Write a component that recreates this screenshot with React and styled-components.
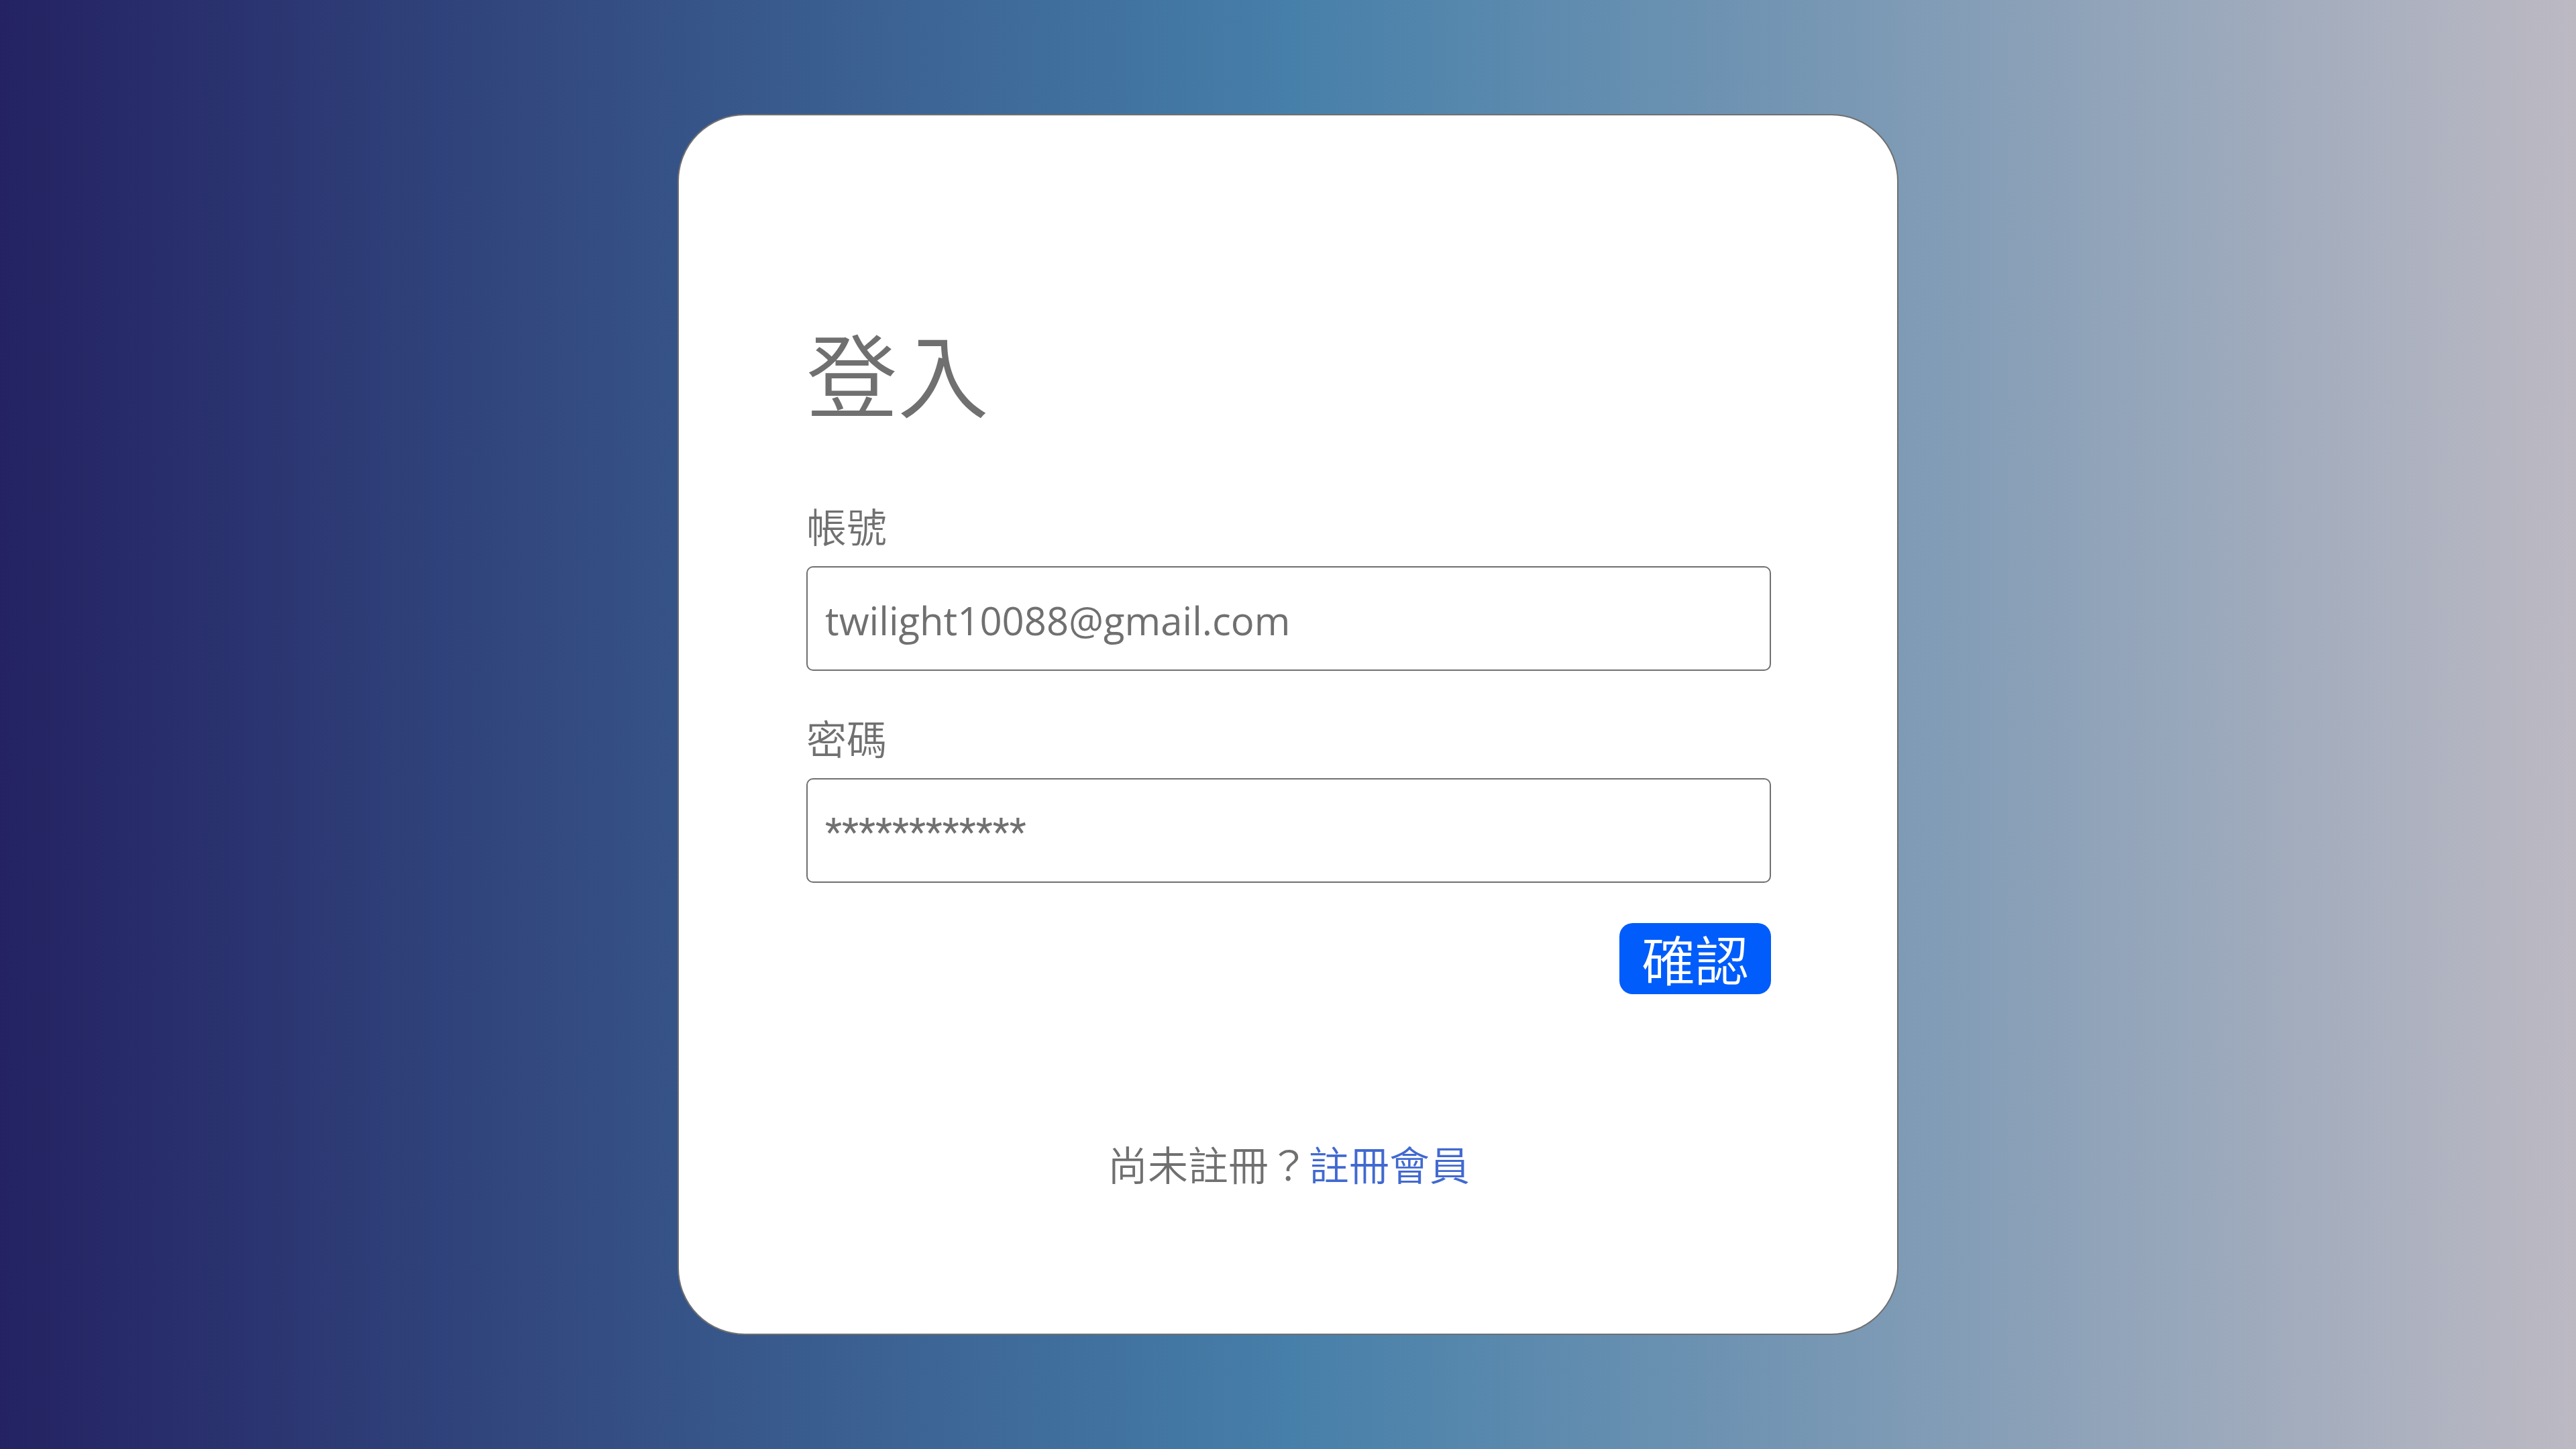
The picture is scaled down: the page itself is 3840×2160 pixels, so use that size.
import React from "react";
import styled, { createGlobalStyle } from "styled-components";

const GlobalStyle = createGlobalStyle`
  *, *::before, *::after { box-sizing: border-box; }
  body {
    margin: 0;
    font-family: "Noto Sans CJK TC", sans-serif;
    color: #707070;
  }
`;

const Page = styled.main`
  min-height: 100vh;
  display: flex;
  align-items: center;
  justify-content: center;
  background: linear-gradient(90deg, #242262 0%, #467fa9 50%, #bcb9c3 100%);
`;

const Card = styled.section`
  width: 100%;
  max-width: 1820px;
  padding: 282px 188px 214px 190px;
  background: #fff;
  border: 2px solid #707070;
  border-radius: 100px;
  font-weight: 350;
`;

const Title = styled.h1`
  margin: 0 0 90px;
  font-size: 136px;
  line-height: 200px;
  font-weight: inherit;
`;

const Form = styled.form`
  display: flex;
  flex-direction: column;
`;

const Field = styled.div`
  display: flex;
  flex-direction: column;
  margin-bottom: 60px;
`;

const Label = styled.label`
  margin-bottom: 22px;
  font-size: 60px;
  line-height: 78px;
`;

const Input = styled.input`
  width: 100%;
  height: 156px;
  padding: 4px 26px 0;
  border: 2px solid #707070;
  border-radius: 10px;
  background: #fff;
  color: #707070;
  font-family: ${(p) => (p.$masked ? "Roboto" : '"Open Sans"')}, sans-serif;
  font-size: 58px;
  font-weight: 400;
  outline: none;
`;

const Submit = styled.button`
  align-self: flex-end;
  padding: 0 33px 4px;
  border: 0;
  border-radius: 20px;
  background: #005cfa;
  color: #fff;
  font-family: inherit;
  font-size: 80px;
  font-weight: inherit;
  line-height: 102px;
  cursor: pointer;
`;

const Footer = styled.p`
  margin: 212px 0 0;
  font-size: 60px;
  line-height: 80px;
  text-align: center;
`;

const Link = styled.a`
  color: #4169d1;
  text-decoration: none;
`;

export default function App() {
  return (
    <>
      <GlobalStyle />
      <Page>
        <Card>
          <Title>登入</Title>
          <Form onSubmit={(e) => e.preventDefault()}>
            <Field>
              <Label htmlFor="account">帳號</Label>
              <Input id="account" type="email" defaultValue="twilight10088@gmail.com" />
            </Field>
            <Field>
              <Label htmlFor="password">密碼</Label>
              <Input id="password" type="text" autoComplete="off" $masked defaultValue="************" />
            </Field>
            <Submit type="submit">確認</Submit>
          </Form>
          <Footer lang="zh-Hant">
            尚未註冊？<Link href="#register">註冊會員</Link>
          </Footer>
        </Card>
      </Page>
    </>
  );
}
